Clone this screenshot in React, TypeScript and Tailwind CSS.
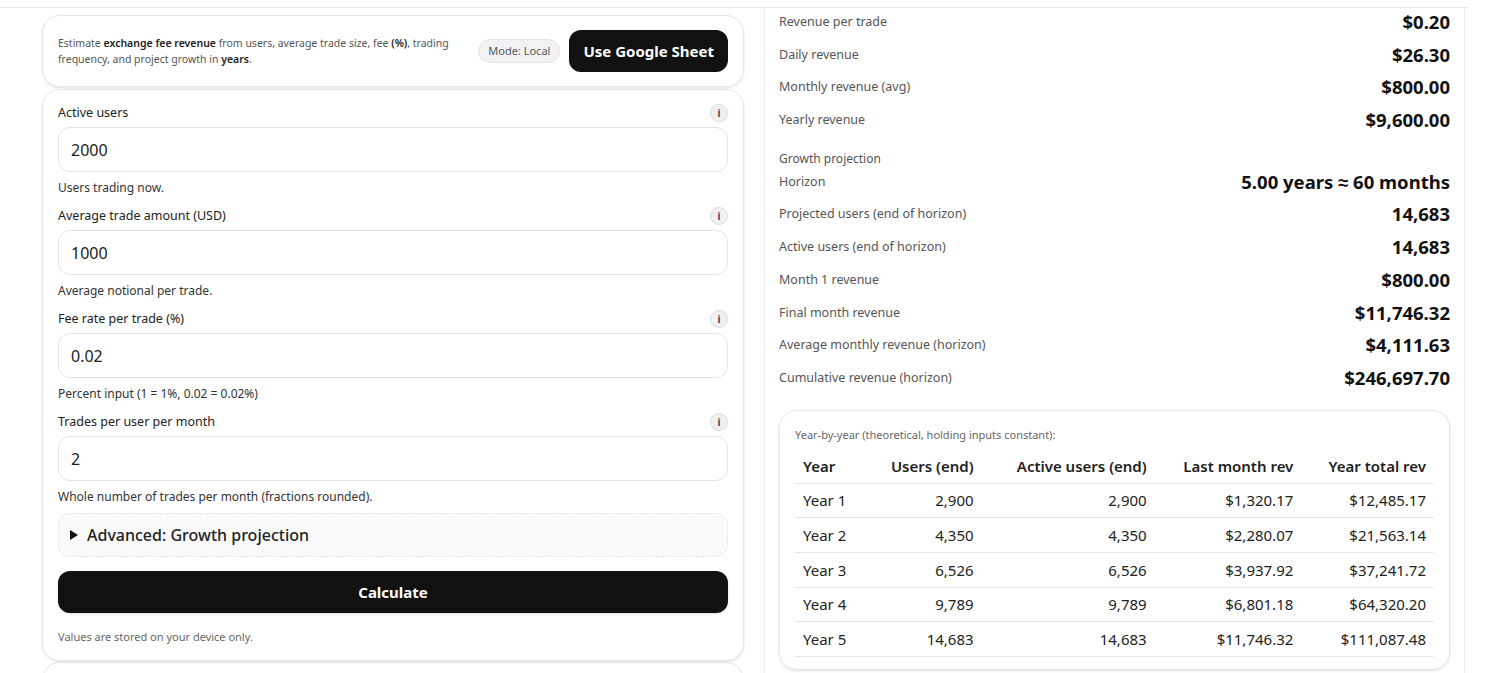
import { useState } from 'react';

const fields = [
  { label: 'Active users', value: '2000', help: 'Users trading now.' },
  { label: 'Average trade amount (USD)', value: '1000', help: 'Average notional per trade.' },
  { label: 'Fee rate per trade (%)', value: '0.02', help: 'Percent input (1 = 1%, 0.02 = 0.02%)' },
  { label: 'Trades per user per month', value: '2', help: 'Whole number of trades per month (fractions rounded).' },
];

const top = [
  ['Revenue per trade', '$0.20'],
  ['Daily revenue', '$26.30'],
  ['Monthly revenue (avg)', '$800.00'],
  ['Yearly revenue', '$9,600.00'],
];

const growth = [
  ['Projected users (end of horizon)', '14,683'],
  ['Active users (end of horizon)', '14,683'],
  ['Month 1 revenue', '$800.00'],
  ['Final month revenue', '$11,746.32'],
  ['Average monthly revenue (horizon)', '$4,111.63'],
  ['Cumulative revenue (horizon)', '$246,697.70'],
];

const years = [
  ['Year 1', '2,900', '2,900', '$1,320.17', '$12,485.17'],
  ['Year 2', '4,350', '4,350', '$2,280.07', '$21,563.14'],
  ['Year 3', '6,526', '6,526', '$3,937.92', '$37,241.72'],
  ['Year 4', '9,789', '9,789', '$6,801.18', '$64,320.20'],
  ['Year 5', '14,683', '14,683', '$11,746.32', '$111,087.48'],
];

function Row({ label, value }: { label: string; value: string }) {
  return (
    <div className="flex items-start justify-between h-[32.7px]">
      <span className="text-[12.5px] text-[#555] pt-[2px]">{label}</span>
      <span className="text-[18.5px] font-bold text-[#111] leading-[26px] -mt-[2px]">{value}</span>
    </div>
  );
}

export default function App() {
  const [vals, setVals] = useState(fields.map((f) => f.value));
  return (
    <div className="h-[673px] overflow-hidden bg-white font-['Noto_Sans',sans-serif] text-[#111]">
      <div className="border-t border-[#e8e8ec] w-[1468px] mt-[7px]" />
      <div className="flex gap-[20px] pl-[42px] w-[1466px]">
        <div className="w-[702px] shrink-0 pt-[7px]">
          <div className="rounded-[18px] border border-[#e6e6ea] shadow-sm px-[15px] h-[72px] flex items-center justify-between">
            <p className="text-[10.5px] leading-[16px] text-[#555] w-[400px] m-0">
              Estimate <b className="text-[#222] font-semibold">exchange fee revenue</b> from users, average trade size, fee <b className="text-[#222] font-semibold">(%)</b>, trading frequency, and project growth in <b className="text-[#222] font-semibold">years</b>.
            </p>
            <div className="flex items-center gap-[9px]">
              <span className="text-[11px] text-[#555] bg-[#f2f2f4] border border-[#e3e3e7] rounded-full px-[9px] py-[3px]">Mode: Local</span>
              <button className="bg-[#111] text-white font-bold text-[15px] font-['Liberation_Sans',sans-serif] rounded-[12px] px-[14px] h-[42px]">Use Google Sheet</button>
            </div>
          </div>
          <div className="mt-[2px] rounded-[18px] border border-[#e6e6ea] shadow-sm px-[15px] pt-[11px] pb-[14px]">
            {fields.map((f, i) => (
              <div key={f.label} className="h-[103px]">
                <div className="flex justify-between items-center h-[24px]">
                  <span className="text-[12.5px] text-[#222]">{f.label}</span>
                  <span className="w-[18px] h-[18px] rounded-full bg-[#f0f0f2] border border-[#ddd] text-[10px] font-bold flex items-center justify-center text-[#444]">i</span>
                </div>
                <input
                  value={vals[i]}
                  onChange={(e) => setVals(vals.map((v, j) => (j === i ? e.target.value : v)))}
                  className="mt-[2px] w-full h-[45px] rounded-[12px] border border-[#e3e3e7] px-[12px] text-[16px] text-[#222] outline-none"
                />
                <div className="text-[12px] text-[#333] mt-[7px]">{f.help}</div>
              </div>
            ))}
            <div className="mt-[0px] h-[44px] rounded-[12px] border border-dashed border-[#e6e6ea] bg-[#fafafa] flex items-center px-[11px] text-[16px] font-medium text-[#222]">
              <span className="inline-block w-0 h-0 border-y-[5px] border-y-transparent border-l-[8px] border-l-[#111] mr-[9px]" />
              Advanced: Growth projection
            </div>
            <button className="mt-[14px] w-full h-[42px] rounded-[12px] bg-[#111] text-white font-bold text-[15px] font-['Liberation_Sans',sans-serif] shadow">Calculate</button>
            <div className="text-[11px] text-[#666] mt-[16px]">Values are stored on your device only.</div>
          </div>
          <div className="mt-[1px] h-[20px] rounded-t-[18px] border border-[#e6e6ea]" />
        </div>
        <div className="w-[701px] border-x border-[#ececef] px-[14px] pt-[3px] pb-[20px]">
          {top.map(([l, v]) => <Row key={l} label={l} value={v} />)}
          <div className="text-[12px] text-[#555] mt-[6px] h-[23px] flex items-center">Growth projection</div>
          <Row label="Horizon" value="5.00 years ≈ 60 months" />
          {growth.map(([l, v]) => <Row key={l} label={l} value={v} />)}
          <div className="mt-[10px] rounded-[18px] border border-[#e6e6ea] shadow-sm px-[15px] pt-[16px] pb-[12px]">
            <div className="text-[11px] text-[#666] mb-[6px]">Year-by-year (theoretical, holding inputs constant):</div>
            <table className="w-full text-[15px] text-[#222]">
              <thead>
                <tr className="border-b border-[#e6e6ea] h-[34px]">
                  <th className="text-left font-semibold pl-[8px]">Year</th>
                  <th className="text-right font-semibold">Users (end)</th>
                  <th className="text-right font-semibold">Active users (end)</th>
                  <th className="text-right font-semibold">Last month rev</th>
                  <th className="text-right font-semibold pr-[8px]">Year total rev</th>
                </tr>
              </thead>
              <tbody>
                {years.map((r) => (
                  <tr key={r[0]} className="border-b border-[#e6e6ea] h-[34.7px]">
                    <td className="pl-[8px]">{r[0]}</td>
                    <td className="text-right">{r[1]}</td>
                    <td className="text-right">{r[2]}</td>
                    <td className="text-right">{r[3]}</td>
                    <td className="text-right pr-[8px]">{r[4]}</td>
                  </tr>
                ))}
              </tbody>
            </table>
          </div>
        </div>
      </div>
    </div>
  );
}
